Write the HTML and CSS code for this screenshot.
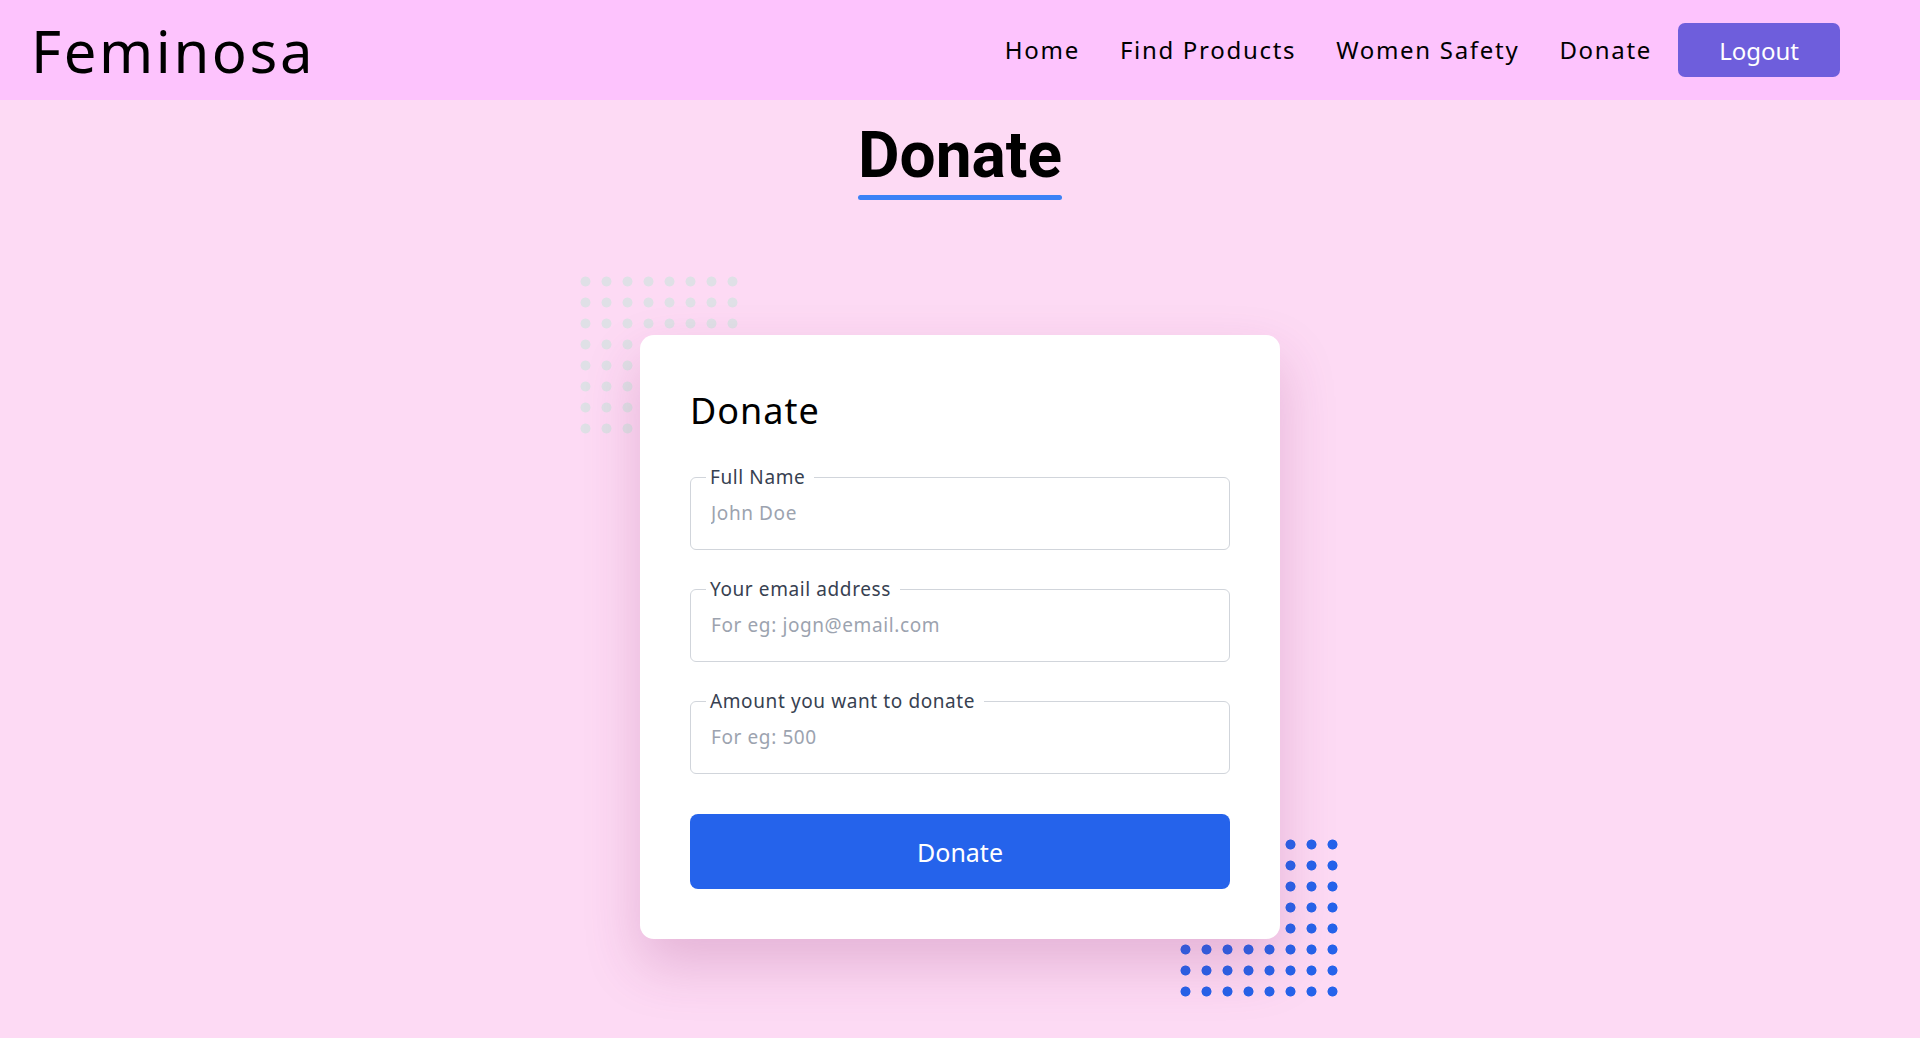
FILE: index.html
```html
<!DOCTYPE html>
<html lang="en">
<head>
    <meta charset="UTF-8">
    <meta name="viewport" content="width=device-width, initial-scale=1.0">
    <title>Feminosa - Donate</title>
    <link rel="stylesheet" href="styles.css">
</head>
<body>
    <header class="topbar">
        <a class="logo" href="#">Feminosa</a>
        <nav class="nav">
            <a href="#">Home</a>
            <a href="#">Find Products</a>
            <a href="#">Women Safety</a>
            <a href="#">Donate</a>
            <button class="logout" type="button">Logout</button>
        </nav>
    </header>

    <main class="page">
        <h1 class="page-title">Donate</h1>

        <div class="card-wrap">
            <!-- dotted decorations behind the card -->
            <div class="dots dots-gray"></div>
            <div class="dots dots-blue"></div>

            <section class="card">
                <h2>Donate</h2>
                <form id="donateForm">
                    <fieldset class="field">
                        <legend>Full Name</legend>
                        <input type="text" name="name" placeholder="John Doe">
                    </fieldset>
                    <fieldset class="field">
                        <legend>Your email address</legend>
                        <input type="email" name="email" placeholder="For eg: jogn@email.com">
                    </fieldset>
                    <fieldset class="field">
                        <legend>Amount you want to donate</legend>
                        <input type="number" name="amount" placeholder="For eg: 500">
                    </fieldset>
                    <button type="submit" class="donate-btn">Donate</button>
                </form>
            </section>
        </div>
    </main>
</body>
</html>
```

FILE: styles.css
```css
html,
body {
    min-height: 100vh;
}

body {
    margin: 0;
    font-family: "Noto Sans", "Open Sans", sans-serif;
    background-color: #fddaf4; /* soft pink page */
    color: #000;
}

a {
    color: inherit;
    text-decoration: none;
}

/* top navigation */
.topbar {
    height: 100px;
    display: flex;
    align-items: center;
    justify-content: space-between;
    padding: 0 80px 0 31px;
    background-color: #fdc3fd;
}

.logo {
    font-size: 58px;
    letter-spacing: 2.6px;
    line-height: 1;
    margin-top: 2px;
}

.nav {
    display: flex;
    align-items: center;
}

.nav a {
    font-size: 24px;
    letter-spacing: 1.7px;
    padding: 0 20px;
    margin-top: -2px;
}

.logout {
    margin-left: 6px;
    height: 54px;
    padding: 0 41px;
    border: none;
    border-radius: 7px;
    background-color: #6e5edc;
    color: #fff;
    font-family: inherit;
    font-size: 24px;
    cursor: pointer;
}

/* page content */
.page {
    display: flex;
    flex-direction: column;
    align-items: center;
    padding-bottom: 80px;
}

.page-title {
    display: inline-block;
    margin: 24px 0 0;
    font-family: Roboto, "Noto Sans", sans-serif;
    font-size: 64px;
    font-weight: 700;
    line-height: 1;
}

.page-title::after {
    content: "";
    display: block;
    height: 5px;
    margin-top: 7px;
    border-radius: 3px;
    background-color: #3b82f6;
}

.card-wrap {
    position: relative;
    width: 640px;
    margin-top: 135px;
}

.dots {
    position: absolute;
    width: 168px;
    height: 168px;
    background-size: 21px 21px;
}

.dots-gray {
    left: -65px;
    top: -64px;
    background-image: radial-gradient(circle at 10.5px 10.5px, #dfe0e6 4.7px, transparent 5.3px);
}

.dots-blue {
    right: -63px;
    bottom: -63px;
    background-image: radial-gradient(circle at 10.5px 10.5px, #2563eb 4.7px, transparent 5.3px);
}

.card {
    position: relative;
    padding: 54px 50px 50px;
    background-color: #fff;
    border-radius: 14px;
    box-shadow: 0 26px 55px rgba(140, 40, 110, 0.22);
}

.card h2 {
    margin: 0 0 33px;
    font-size: 36px;
    font-weight: 400;
    letter-spacing: 1px;
    line-height: 1.2;
}

.field {
    margin: 0 0 27px;
    padding: 0 20px 12px;
    border: 1px solid #d1d5db;
    border-radius: 6px;
}

.field legend {
    margin-left: -5px;
    padding: 0 9px 0 4px;
    font-size: 19px;
    letter-spacing: 0.6px;
    line-height: 24px;
    color: #374151;
}

.field input {
    display: block;
    width: 100%;
    height: 48px;
    padding: 0;
    border: none;
    outline: none;
    font-family: inherit;
    font-size: 19px;
    letter-spacing: 0.6px;
    color: #111827;
    background: transparent;
}

.field input::placeholder {
    color: #9ca3af;
}

.field:last-of-type {
    margin-bottom: 0;
}

.donate-btn {
    display: block;
    width: 100%;
    height: 75px;
    margin-top: 40px;
    border: none;
    border-radius: 8px;
    background-color: #2563eb;
    color: #fff;
    font-family: inherit;
    font-size: 25px;
    cursor: pointer;
}

.donate-btn:hover {
    background-color: #1d4ed8;
}
```
